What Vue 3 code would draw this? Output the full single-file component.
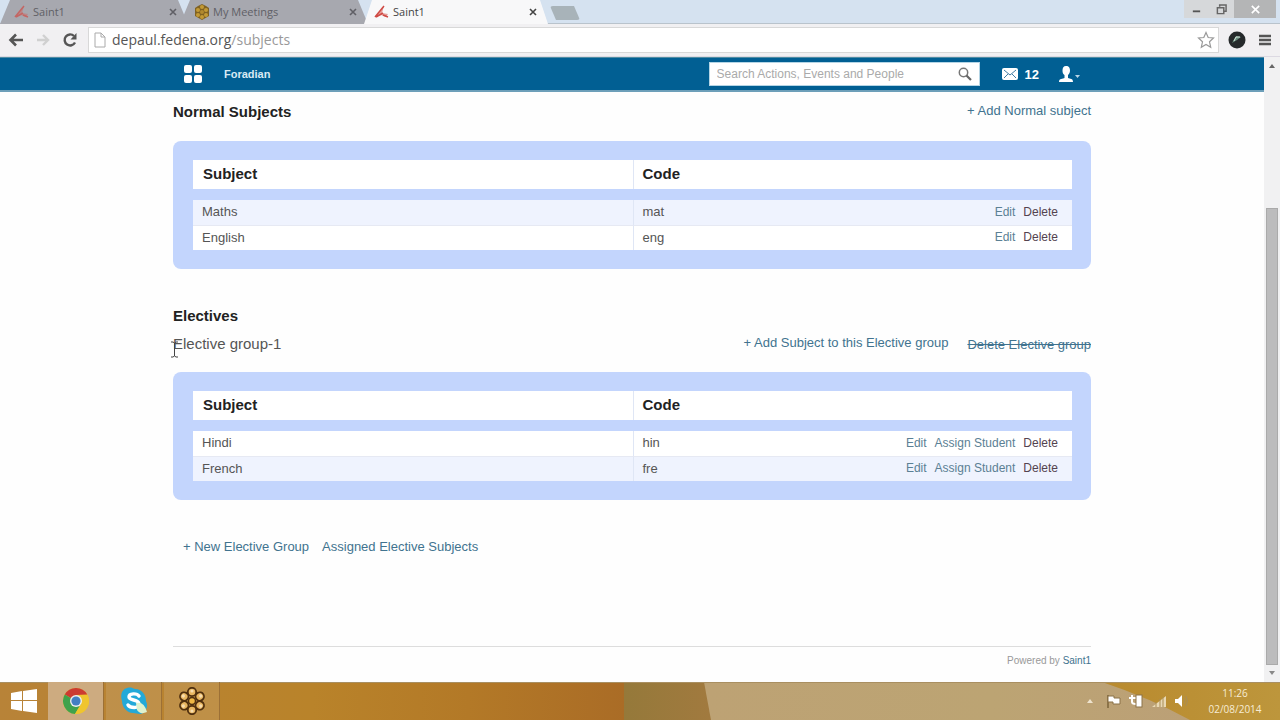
<script setup>
import { ref } from 'vue'

const tabs = [
  { title: 'Saint1', icon: 'saint' },
  { title: 'My Meetings', icon: 'flower' },
  { title: 'Saint1', icon: 'saint', active: true }
]
const normal = [
  { name: 'Maths', code: 'mat', shaded: true, actions: ['Edit'] },
  { name: 'English', code: 'eng', actions: ['Edit'] }
]
const electives = [
  { name: 'Hindi', code: 'hin', actions: ['Edit', 'Assign Student'] },
  { name: 'French', code: 'fre', shaded: true, actions: ['Edit', 'Assign Student'] }
]
const groups = { normal, electives }
const address = ref('depaul.fedena.org/subjects')
const query = ref('')
const petals = [0, 60, 120, 180, 240, 300]
</script>

<template>
  <div class="screen">
    <div class="tabstrip">
      <div v-for="(t, i) in tabs" :key="i" class="tab" :class="{ active: t.active }">
        <svg v-if="t.icon === 'saint'" class="fav" viewBox="0 0 16 16" aria-hidden="true">
          <path d="M1 13 L10 2 L8 9 L14 10 L12 13 L7 11 Z" fill="#d9534c" opacity=".55" />
          <path d="M1 13 L10 2 M2 13 L9 9 M9 11 L14 13" stroke="#cf4b45" stroke-width="1.5" fill="none" />
        </svg>
        <svg v-else class="fav" viewBox="0 0 16 16" aria-hidden="true">
          <path d="M8 0 L12 2 L15 4 L15 12 L8 16 L1 12 L1 4 L4 2 Z" fill="#806222" />
          <g fill="#c39a35"><circle cx="8" cy="3" r="2" /><circle cx="8" cy="13" r="2" /><circle cx="4" cy="6" r="2" /><circle cx="12" cy="6" r="2" /><circle cx="4" cy="11" r="2" /><circle cx="12" cy="11" r="2" /></g>
          <circle cx="8" cy="8" r="2" fill="#b28a2f" />
        </svg>
        <span class="tab-title">{{ t.title }}</span>
        <button class="tab-close" aria-label="Close tab">
          <svg viewBox="0 0 8 8"><path d="M1 1 L7 7 M7 1 L1 7" stroke="currentColor" stroke-width="1.6" /></svg>
        </button>
      </div>
      <button class="new-tab" aria-label="New tab"></button>
      <div class="win">
        <button aria-label="Minimize"><svg viewBox="0 0 12 12"><path d="M2 8 H10" stroke="#555" stroke-width="2" /></svg></button>
        <button aria-label="Restore"><svg viewBox="0 0 12 12"><path d="M4 3 V1 H11 V8 H9 M1.5 4 H8.500 V10.500 H1.500 Z" fill="none" stroke="#666" stroke-width="1.6" /></svg></button>
        <button class="win-close" aria-label="Close"><svg viewBox="0 0 12 12"><path d="M2 2 L10 10 M10 2 L2 10" stroke="#fff" stroke-width="1.8" /></svg></button>
      </div>
    </div>

    <div class="toolbar">
      <button aria-label="Back"><svg viewBox="0 0 16 16"><path d="M15 8 H3 M8 2.500 L2.500 8 L8 13.500" fill="none" stroke="#555" stroke-width="2.600" /></svg></button>
      <button aria-label="Forward"><svg viewBox="0 0 16 16"><path d="M2 8 H13 M8 3 L13 8 L8 13" fill="none" stroke="#d0d0d0" stroke-width="2.400" /></svg></button>
      <button aria-label="Reload"><svg viewBox="0 0 16 16"><path d="M13 10.500 A5.500 5.500 0 1 1 12 4" fill="none" stroke="#555" stroke-width="2.400" /><path d="M14.500 1 V7.500 H8.500 Z" fill="#555" /></svg></button>
      <label class="address">
        <svg class="page-icon" viewBox="0 0 12 16" aria-hidden="true"><path d="M1 1 H7 L11 5 V15 H1 Z M7 1 V5 H11" fill="#fff" stroke="#aaa" /></svg>
        <span class="url" aria-hidden="true">depaul.fedena.org<i>/subjects</i></span>
        <input v-model="address" class="url-input" aria-label="Address" />
        <svg class="star" viewBox="0 0 18 18" aria-hidden="true"><path d="M9 1.500 L11.200 6.500 L16.500 7 L12.500 10.800 L13.700 16.300 L9 13.400 L4.300 16.300 L5.500 10.800 L1.500 7 L6.800 6.500 Z" fill="#fff" stroke="#999" stroke-width="1.200" /></svg>
      </label>
      <button class="ext" aria-label="Extension"><svg viewBox="0 0 18 18"><circle cx="9" cy="9" r="8.500" fill="#262a2b" /><path d="M4 12 L8 5 L13 6 L9 9 Z" fill="#668b7b" /><path d="M6 10 L8 6 L12 6" stroke="#d7e7de" fill="none" /></svg></button>
      <button class="menu" aria-label="Menu"><svg viewBox="0 0 14 14"><path d="M1 3 H13 M1 7 H13 M1 11 H13" stroke="#555" stroke-width="2.400" /></svg></button>
    </div>

    <div class="viewport">
      <div class="page">
        <header class="appbar">
          <div class="wrap bar">
            <button class="apps" aria-label="Applications"><svg viewBox="0 0 20 20"><g fill="#fff"><rect x="1" y="1" width="8" height="8" rx="2" /><rect x="11" y="1" width="8" height="8" rx="2" /><rect x="1" y="11" width="8" height="8" rx="2" /><rect x="11" y="11" width="8" height="8" rx="2" /></g></svg></button>
            <a href="#" class="brand">Foradian</a>
            <div class="search">
              <input v-model="query" type="text" aria-label="Search" placeholder="Search Actions, Events and People" />
              <button aria-label="Search"><svg viewBox="0 0 14 14"><circle cx="5.500" cy="5.500" r="4.200" fill="none" stroke="#777" stroke-width="1.500" /><path d="M8.500 8.500 L13 13" stroke="#666" stroke-width="2.200" /></svg></button>
            </div>
            <a href="#" class="mail"><svg viewBox="0 0 18 12" aria-hidden="true"><rect x="1" width="16" height="12" rx="2" fill="#fff" /><path d="M3 2 L9 7 L15 2 M3 10 L7 6 M15 10 L11 6" fill="none" stroke="#3f7da5" /></svg>12</a>
            <button class="user" aria-label="Account"><svg viewBox="0 0 22 16"><path d="M7 0 C10 0 11 2 11 4.500 C11 7 10 8 9 9 V12 C11 13 14 12 14 16 H0 C0 12 4 13 5.500 12 V9 C4 8 3.500 7 3.500 4.500 C3.500 2 4.500 0 7 0 Z" fill="#fff" /><path d="M16 9 H21 L18.500 12 Z" fill="#b9d5e6" /></svg></button>
          </div>
        </header>

        <main class="wrap">
          <div class="heading first">
            <h2>Normal Subjects</h2>
            <a href="#">+ Add Normal subject</a>
          </div>
          <template v-for="(rows, key) in groups" :key="key">
            <template v-if="key === 'electives'">
              <h2 class="electives">Electives</h2>
              <div class="heading group">
                <h3>Elective group-1
                  <svg class="caret" viewBox="0 0 9 17" aria-hidden="true"><path d="M1 1 H3 L4.500 2 L6 1 H8 M4.500 2 V15 M1 16 H3 L4.500 15 L6 16 H8" fill="none" stroke="#444" /></svg>
                </h3>
                <a href="#">+ Add Subject to this Elective group</a>
                <a href="#" class="struck">Delete Elective group</a>
              </div>
            </template>
            <div class="panel">
              <table>
                <thead><tr><th>Subject</th><th>Code</th></tr></thead>
                <tbody>
                  <tr v-for="r in rows" :key="r.code" :class="{ shaded: r.shaded }">
                    <td>{{ r.name }}</td>
                    <td><div class="cell"><span>{{ r.code }}</span>
                      <a v-for="a in r.actions" :key="a" href="#">{{ a }}</a>
                      <a href="#" class="delete">Delete</a></div></td>
                  </tr>
                </tbody>
              </table>
            </div>
          </template>
          <nav class="links">
            <a href="#">+ New Elective Group</a>
            <a href="#">Assigned Elective Subjects</a>
          </nav>
        </main>
        <footer class="wrap foot">Powered by <a href="#">Saint1</a></footer>
      </div>
      <div class="scrollbar" aria-hidden="true">
        <svg viewBox="0 0 10 10"><path d="M2 7 L5 3 L8 7 Z" fill="#666" /></svg>
        <div class="track"><div class="thumb"></div></div>
        <svg viewBox="0 0 10 10"><path d="M2 3 L5 7 L8 3 Z" fill="#888" /></svg>
      </div>
    </div>

    <div class="taskbar">
      <svg class="wallpaper" viewBox="0 0 1280 38" preserveAspectRatio="none" aria-hidden="true">
        <defs>
          <linearGradient id="amber"><stop offset="0" stop-color="#b88338" /><stop offset=".5" stop-color="#b9832a" /><stop offset=".75" stop-color="#b37927" /><stop offset="1" stop-color="#aa6c26" /></linearGradient>
          <linearGradient id="olive"><stop offset="0" stop-color="#95793a" /><stop offset="1" stop-color="#a27a3f" /></linearGradient>
          <linearGradient id="sand"><stop offset="0" stop-color="#bda274" /><stop offset=".5" stop-color="#bca473" /><stop offset="1" stop-color="#bb9e78" /></linearGradient>
          <linearGradient id="gold"><stop offset="0" stop-color="#b98a2e" /><stop offset="1" stop-color="#bd963c" /></linearGradient>
        </defs>
        <rect width="625" height="38" fill="url(#amber)" />
        <rect x="624" width="92" height="38" fill="url(#olive)" />
        <path d="M704 0 H1280 V38 H711 Z" fill="url(#sand)" />
        <path d="M1102 0 H1280 V38 H1190 Q1150 16 1102 0 Z" fill="url(#gold)" />
        <rect width="1280" height="1" fill="#a98f61" />
      </svg>
      <button class="task start" aria-label="Start"><svg viewBox="0 0 26 24"><path d="M0 4 L11 2 V11 H0 Z M12 2 L26 0 V11 H12 Z M0 12 H11 V22 L0 20 Z M12 12 H26 V24 L12 22 Z" fill="#fff" /></svg></button>
      <button class="task on" aria-label="Chrome"><svg viewBox="0 0 26 26">
        <circle cx="13" cy="13" r="13" fill="#efc52e" />
        <path d="M13 13 L1.740 6.500 A13 13 0 0 1 24.260 6.500 L13 7 Z" fill="#cc3b31" />
        <path d="M13 13 L1.740 6.500 A13 13 0 0 0 12 26 L18 16 Z" fill="#3fa24c" />
        <path d="M13 7 H24.500 A13 13 0 0 1 12 26 L18 16 Z" fill="#efc52e" />
        <circle cx="13" cy="13" r="6" fill="#eee" /><circle cx="13" cy="13" r="4.600" fill="#427fc2" /></svg></button>
      <button class="task" aria-label="Skype"><svg viewBox="0 0 28 28">
        <path d="M7 1 C11 0 12 1 15 2 C22 2 26 8 26 14 C29 20 25 27 20 27 C17 27 16 26 13 26 C7 26 2 20 2 14 C0 8 2 2 7 1 Z" fill="#24a9d8" />
        <path d="M19 9 C17 6 9 6 9 10 C9 14 19 12 19 17 C19 22 10 21 8 18" fill="none" stroke="#fff" stroke-width="3.400" stroke-linecap="round" />
        <path d="M16 16 Q24 14 27 25 Q20 28 17 23 Z" fill="#dff2cf" /></svg></button>
      <button class="task" aria-label="Meetings"><svg viewBox="0 0 28 28">
        <g v-for="p in petals" :key="p" :transform="`rotate(${p} 14 14)`"><circle cx="14" cy="5" r="4.200" fill="#e8b661" stroke="#50300f" stroke-width="1.800" /><circle cx="14" cy="4" r="1.600" fill="#f7ddb0" /></g>
        <circle cx="14" cy="14" r="3.500" fill="#efb744" stroke="#50300f" stroke-width="1.500" /></svg></button>
      <div class="tray">
        <svg viewBox="0 0 16 16"><path d="M5 10 L8 6 L11 10 Z" fill="#eee3ce" /></svg>
        <svg viewBox="0 0 16 16"><path d="M3 2 V15" stroke="#8b7348" stroke-width="2" /><path d="M3 3 H9 V5 H15 V11 H8 V9 H3 Z" fill="#fff" stroke="#8b7348" /></svg>
        <svg viewBox="0 0 16 16"><path d="M1 5 H8 M4 2 V9 Q4 11 8 11" stroke="#fff" stroke-width="2" fill="none" /><rect x="8" y="2" width="6" height="12" fill="#fff" stroke="#8b7348" /></svg>
        <svg viewBox="0 0 16 16"><path d="M1 14 L15 3 V14 Z" fill="#e9d8b4" /><path d="M5 14 V9 M9 14 V6 M12 14 V4" stroke="#a98d55" /></svg>
        <svg viewBox="0 0 16 16"><path d="M1 6 H4 L8 2 V14 L4 10 H1 Z" fill="#fff" /><path d="M10 5 Q12 8 10 11 M12 3 Q15 8 12 13" stroke="#a98d55" fill="none" /></svg>
      </div>
      <div class="clock"><span>11:26</span><span>02/08/2014</span></div>
    </div>
  </div>
</template>

<style>
body { background: #fff; }
</style>

<style scoped>
.screen { display: flex; flex-direction: column; min-height: 100vh; font-family: "Liberation Sans", Arial, sans-serif; font-size: 13px; color: #555; }
* { box-sizing: border-box; }
button { padding: 0; border: 0; background: none; font: inherit; color: inherit; display: grid; place-items: center; }
a { color: #41738f; text-decoration: none; }
svg { display: block; flex: none; }
h2, h3 { margin: 0; }

.tabstrip { display: flex; height: 24px; background: #d5e2f0; border-bottom: 1px solid #b9c3cc; font: 11px/22px "Open Sans", sans-serif; }
.tab { display: flex; align-items: center; width: 188px; height: 24px; padding: 0 11px 0 14px; margin-right: -8px; background: #a7a8af; color: #606066; clip-path: polygon(10px 0, 178px 0, 188px 100%, 0 100%); }
.tab.active { background: #f8f8f9; color: #444; clip-path: polygon(12px 0, 180px 0, 188px 100%, 4px 100%); }
.fav { width: 16px; height: 16px; margin-right: 3px; }
.tab:first-child .fav { opacity: .7; }
.tab-title { flex: 1; }
.tab-close svg { width: 8px; height: 8px; }
.new-tab { width: 30px; height: 14px; margin: 6px 0 0 10px; background: #a8b3b9; border-radius: 3px; clip-path: polygon(0 0, 24px 0, 100% 100%, 6px 100%); }
.win { display: flex; height: 18px; margin: 0 4px 0 auto; background: #d6d8da; }
.win button { width: 25px; }
.win svg { width: 11px; height: 11px; }
.win .win-close { width: 42px; background: #b4b5b6; }

.toolbar { display: flex; align-items: center; height: 33px; padding: 0 7px; background: #f1f0f2; border-bottom: 1px solid #dcd9e2; }
.toolbar button { width: 18px; margin-right: 9px; }
.toolbar button svg { width: 16px; height: 16px; }
.address { position: relative; display: flex; flex: 1; align-items: center; height: 26px; padding: 0 3px 0 5px; background: #fff; border: 1px solid #d8d8d8; }
.page-icon { width: 12px; height: 16px; }
.url { flex: 1; padding-left: 6px; font: 14px/22px "Open Sans", sans-serif; color: #555; }
.url i { font-style: normal; color: #999; }
.url-input { position: absolute; inset: 0; width: 100%; border: 0; padding: 0 24px; background: none; color: transparent; outline: 0; }
.star { width: 18px; height: 18px; }
.toolbar .ext { margin: 0 12px 0 9px; }
.toolbar .ext svg { width: 18px; height: 18px; }
.toolbar .menu { width: 14px; margin: 0 1px 0 0; }
.toolbar .menu svg { width: 14px; height: 14px; }

.viewport { display: flex; flex: 1; }
.page { display: flex; flex: 1; flex-direction: column; background: #fefefe; }
.wrap { width: 100%; max-width: 918px; margin: 0 auto; }
.appbar { background: #015f93; border-top: 1px solid #4f8da3; border-bottom: 2px solid #6d9fb9; }
.bar { display: flex; align-items: center; height: 32px; padding-left: 10px; }
.apps svg { width: 20px; height: 20px; }
.brand { flex: 1; padding-left: 21px; font-size: 11px; font-weight: bold; color: #d9eaf4; }
.search { display: flex; width: 271px; height: 24px; background: #fff; border: 1px solid #b5d5e5; }
.search input { flex: 1; min-width: 0; padding: 0 7px; border: 0; background: none; font: 12px "Liberation Sans", Arial, sans-serif; outline: 0; }
.search input::placeholder { color: #aaa; opacity: 1; }
.search button { width: 28px; }
.search svg { width: 14px; height: 14px; }
.mail { display: flex; align-items: center; gap: 6px; margin-left: 21px; color: #fff; font-weight: bold; }
.mail svg { width: 18px; height: 12px; }
.user { margin: 0 10px 0 20px; }
.user svg { width: 22px; height: 16px; }

.heading { display: flex; align-items: center; justify-content: flex-end; gap: 19px; }
.heading h2, .heading h3 { flex: 1; }
.heading a { padding-bottom: 4px; }
h2 { font-size: 15px; line-height: 20px; color: #222; }
h3 { position: relative; font-size: 15px; font-weight: normal; line-height: 20px; color: #555; }
.first { padding: 10px 0 19px; }
.electives { padding-top: 37px; }
.group { padding: 8px 0 18px; }
.heading .struck { padding-bottom: 0; text-decoration: line-through; }
.caret { position: absolute; left: -3px; top: 7px; width: 9px; height: 17px; }
.panel { padding: 19px 19px 19px 20px; background: #c3d5fd; border-radius: 8px; }
table { width: 100%; table-layout: fixed; border-spacing: 0; }
th { height: 29px; padding: 0 10px 2px; background: #fff; color: #222; font-size: 15px; text-align: left; }
th + th { padding-left: 9px; }
tbody::before { content: ""; display: block; height: 11px; }
td { height: 25px; padding: 0 9px 2px; background: #fff; }
tr.shaded td { background: #eff3fe; }
tbody tr + tr td { border-top: 1px solid #e6e9f3; }
th + th, td + td { border-left: 1px solid #dfe6f5; }
.cell { display: flex; align-items: center; gap: 8px; padding-right: 5px; font-size: 12px; }
.cell span { flex: 1; font-size: 13px; }
.cell a { color: #5b8094; }
.cell .delete { color: #54434f; }
.links { display: flex; gap: 13px; padding: 39px 10px 0; line-height: 16px; }
.foot { margin-top: auto; padding: 7px 0 14px; border-top: 1px solid #ddd; font-size: 10px; line-height: 14px; color: #999; text-align: right; }

.scrollbar { display: flex; flex-direction: column; align-items: center; width: 16px; padding: 4px 0; background: #f1f1f2; }
.scrollbar svg { width: 10px; height: 10px; }
.track { display: flex; flex: 1; align-self: stretch; align-items: flex-end; justify-content: center; padding-bottom: 3px; }
.thumb { width: 12px; height: 77%; background: #bcbcbd; border: 1px solid #aaa; }

.taskbar { position: relative; display: flex; align-items: stretch; height: 38px; }
.wallpaper { position: absolute; inset: 0; width: 100%; height: 100%; }
.task { position: relative; width: 56px; margin-right: 2px; background: rgba(205, 175, 130, .3); border-right: 1px solid #9c7036; }
.task svg { width: 28px; height: 28px; }
.task.start { width: 48px; margin: 0; background: none; border: 0; }
.task.start svg { width: 26px; height: 24px; }
.task.on { background: #cdab80; }
.task.on svg { width: 26px; height: 26px; }
.tray { position: relative; display: flex; align-items: center; gap: 7px; margin-left: auto; }
.tray svg { width: 16px; height: 16px; }
.clock { position: relative; display: flex; flex-direction: column; align-items: center; justify-content: center; width: 90px; font: 10px/16px "Open Sans", sans-serif; color: #f7ecd5; }
</style>
